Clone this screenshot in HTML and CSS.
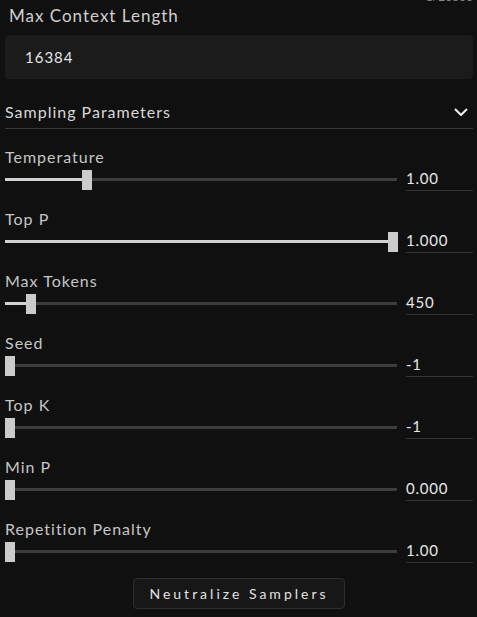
FILE: index.html
```html
<!DOCTYPE html>
<html lang="en">
<head>
    <meta charset="UTF-8">
    <meta name="viewport" content="width=device-width, initial-scale=1.0">
    <title>Sampling Parameters</title>
    <link rel="stylesheet" href="styles.css">
</head>
<body>
    <div class="panel">
        <div class="counter"><span>1/20000</span></div>

        <!-- context length -->
        <div class="context">
            <label class="context-label">Max Context Length</label>
            <div class="context-input">16384</div>
        </div>

        <!-- sampling header -->
        <div class="section-head">
            <span>Sampling Parameters</span>
            <svg class="chevron" width="14" height="8" viewBox="0 0 14 8">
                <path d="M1 1 L7 7 L13 1" fill="none" stroke="#f2f2f2" stroke-width="2"/>
            </svg>
        </div>

        <div class="params">
            <div class="param">
                <div class="param-label">Temperature</div>
                <div class="param-row">
                    <div class="slider">
                        <div class="fill" style="width: 20%"></div>
                        <div class="rail"><div class="thumb" style="left: 20%"></div></div>
                    </div>
                    <div class="value">1.00</div>
                </div>
            </div>
            <div class="param">
                <div class="param-label">Top P</div>
                <div class="param-row">
                    <div class="slider">
                        <div class="fill" style="width: 100%"></div>
                        <div class="rail"><div class="thumb" style="left: 100%"></div></div>
                    </div>
                    <div class="value">1.000</div>
                </div>
            </div>
            <div class="param">
                <div class="param-label">Max Tokens</div>
                <div class="param-row">
                    <div class="slider">
                        <div class="fill" style="width: 5.5%"></div>
                        <div class="rail"><div class="thumb" style="left: 5.5%"></div></div>
                    </div>
                    <div class="value">450</div>
                </div>
            </div>
            <div class="param">
                <div class="param-label">Seed</div>
                <div class="param-row">
                    <div class="slider">
                        <div class="rail"><div class="thumb" style="left: 0%"></div></div>
                    </div>
                    <div class="value">-1</div>
                </div>
            </div>
            <div class="param">
                <div class="param-label">Top K</div>
                <div class="param-row">
                    <div class="slider">
                        <div class="rail"><div class="thumb" style="left: 0%"></div></div>
                    </div>
                    <div class="value">-1</div>
                </div>
            </div>
            <div class="param">
                <div class="param-label">Min P</div>
                <div class="param-row">
                    <div class="slider">
                        <div class="rail"><div class="thumb" style="left: 0%"></div></div>
                    </div>
                    <div class="value">0.000</div>
                </div>
            </div>
            <div class="param">
                <div class="param-label">Repetition Penalty</div>
                <div class="param-row">
                    <div class="slider">
                        <div class="rail"><div class="thumb" style="left: 0%"></div></div>
                    </div>
                    <div class="value">1.00</div>
                </div>
            </div>
        </div>

        <div class="actions">
            <button class="neutralize">Neutralize Samplers</button>
        </div>
    </div>
</body>
</html>
```

FILE: styles.css
```css
body {
    margin: 0;
    background-color: #101010;
    color: #d6d6d6;
    font-family: Lato, "Open Sans", sans-serif;
    overflow: hidden;
}
.panel {
    padding: 0 4px 0 5px;
}
.counter {
    display: flex;
    justify-content: flex-end;
    align-items: flex-end;
    height: 3px;
    overflow: hidden;
    margin-bottom: 3px;
    font-size: 12px;
    line-height: 12px;
    color: #888;
}
.context-label {
    display: block;
    padding-left: 4px;
    font-size: 17px;
    line-height: 20px;
    letter-spacing: 1px;
    color: #cfcfcf;
}
.context-input {
    margin-top: 9px;
    height: 44px;
    line-height: 44px;
    padding-left: 20px;
    background-color: #1b1b1b;
    border-radius: 4px;
    font-size: 15px;
    letter-spacing: 1px;
    color: #e4e4e4;
}
.section-head {
    display: flex;
    justify-content: space-between;
    align-items: center;
    margin-top: 23px;
    padding: 0 5px 6px 0;
    border-bottom: 1px solid #3a3a3a;
    font-size: 16px;
    line-height: 20px;
    letter-spacing: 1px;
    color: #d8d8d8;
}
.params {
    padding-top: 18px;
}
.param {
    margin-bottom: 18px;
}
.param-label {
    font-size: 16px;
    line-height: 20px;
    letter-spacing: 1px;
    color: #c6c6c6;
}
.param-row {
    display: flex;
    align-items: center;
    gap: 9px;
    height: 24px;
}
.slider {
    position: relative;
    flex: 1;
    height: 3px;
    background-color: #3d3d3d;
    margin-top: 1px;
}
.fill {
    height: 100%;
    background-color: #d2d2d2;
}
.rail {
    position: absolute;
    left: 0;
    right: 9px;
    top: -8px;
}
.thumb {
    position: absolute;
    top: 0;
    width: 10px;
    height: 20px;
    background-color: #cbcbcb;
}
.value {
    width: 67px;
    height: 23px;
    line-height: 22px;
    border-bottom: 1px solid #333;
    font-size: 15px;
    letter-spacing: 0.8px;
    color: #e8e8e8;
}
.actions {
    display: flex;
    justify-content: center;
    margin-top: -3px;
}
.neutralize {
    width: 212px;
    height: 31px;
    background-color: #171717;
    border: 1px solid #2e2e2e;
    border-radius: 4px;
    font-family: Lato, "Open Sans", sans-serif;
    font-size: 14px;
    letter-spacing: 3px;
    color: #e2e2e2;
}
```
